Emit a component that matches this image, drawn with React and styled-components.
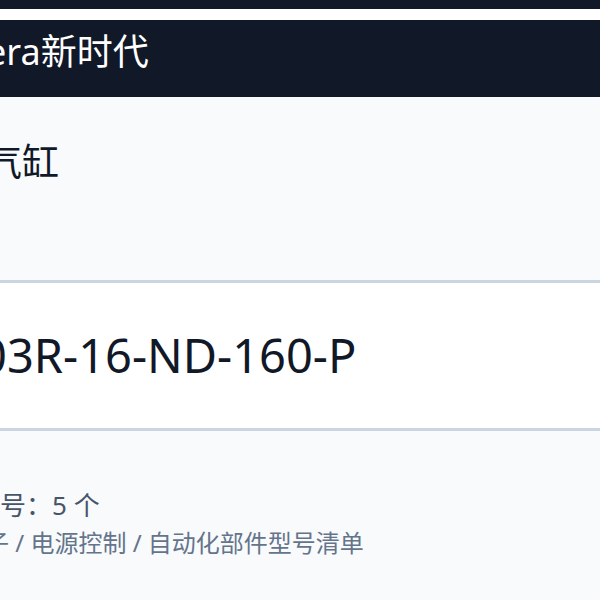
import React from 'react'
import styled, { createGlobalStyle } from 'styled-components'

const GlobalStyle = createGlobalStyle`
  html, body {
    margin: 0;
    padding: 0;
    background: #ffffff;
  }
  body {
    font-family: "Noto Sans", "Noto Sans CJK SC", sans-serif;
    overflow: hidden;
  }
`

const Page = styled.div`
  width: 600px;
  height: 600px;
  overflow: hidden;
  display: flex;
  flex-direction: column;
  background: #ffffff;
`

const TopStrip = styled.div`
  height: 9px;
  background: #111827;
  margin-bottom: 11px;
`

const Header = styled.header`
  height: 77px;
  background: #111827;
  display: flex;
  align-items: center;
  padding-bottom: 14px;
  box-sizing: border-box;
`

const Brand = styled.h1`
  margin: 0 0 0 ${p => p.$shift}px;
  font-size: 36px;
  font-weight: 400;
  line-height: 1.2;
  color: #ffffff;
  white-space: nowrap;
`

const Section = styled.section`
  height: ${p => p.$h}px;
  background: ${p => p.$bg};
  border-bottom: ${p => (p.$line ? '3px solid #cbd5e1' : 'none')};
  display: flex;
  flex-direction: column;
  justify-content: ${p => p.$justify || 'flex-start'};
  padding-top: ${p => p.$pt || 0}px;
  box-sizing: border-box;
`

const Title = styled.div`
  margin-left: ${p => p.$shift}px;
  font-size: ${p => p.$size}px;
  line-height: 1.2;
  color: #111827;
  white-space: nowrap;
`

const Count = styled.div`
  margin-left: ${p => p.$shift}px;
  font-size: 26px;
  line-height: 1.4;
  color: #475569;
  white-space: nowrap;
`

const Crumbs = styled.nav`
  margin: 4px 0 0 ${p => p.$shift}px;
  font-size: 24px;
  line-height: 1.3;
  color: #64748b;
  white-space: nowrap;
`

export default function App() {
  return (
    <>
      <GlobalStyle />
      <Page>
        <TopStrip />
        <Header>
          <Brand $shift={-14}>era新时代</Brand>
        </Header>
        <Section $h={186} $bg="#f8fafc" $line $pt={43}>
          <Title $size={37} $shift={-15}>气缸</Title>
        </Section>
        <Section $h={148} $bg="#ffffff" $line $justify="center">
          <Title $size={47} $shift={-20}>03R-16-ND-160-P</Title>
        </Section>
        <Section $h={169} $bg="#f8fafc" $pt={56}>
          <Count $shift={-26}>型号：5 个</Count>
          <Crumbs $shift={-15}>子 / 电源控制 / 自动化部件型号清单</Crumbs>
        </Section>
      </Page>
    </>
  )
}
